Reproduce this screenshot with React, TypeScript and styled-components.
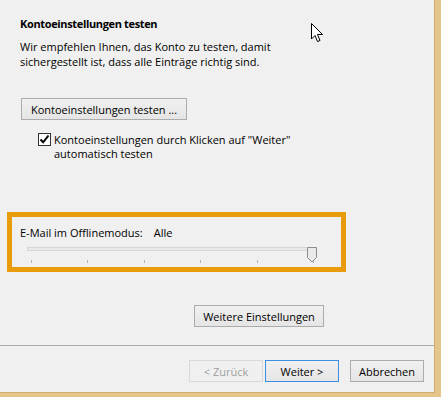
import styled, { createGlobalStyle } from "styled-components";

const GlobalStyle = createGlobalStyle`
  html, body {
    margin: 0;
    padding: 0;
    background: #e6c58b;
  }
  body {
    font-family: "Open Sans", "Noto Sans", sans-serif;
    font-size: 11px;
    color: #000;
  }
`;

const Frame = styled.div`
  width: 441px;
  height: 397px;
  box-sizing: border-box;
  padding: 0 6px 4px 0;
  background: #e6c58b;
`;

const Dialog = styled.div`
  position: relative;
  height: 100%;
  box-sizing: border-box;
  border-right: 1px solid #cfae72;
  border-bottom: 1px solid #cfae72;
  background: #f0f0f0;
  display: flex;
  flex-direction: column;
`;

const Main = styled.div`
  flex: 1;
  display: flex;
  flex-direction: column;
  align-items: flex-start;
  padding: 16px 0 0 20px;
`;

const Title = styled.h1`
  margin: 0;
  font-size: 11px;
  line-height: 15px;
  font-weight: 700;
  letter-spacing: -0.35px;
`;

const Intro = styled.p`
  margin: 8px 0 0;
  line-height: 15px;
`;

const Button = styled.button<{ $default?: boolean; $width?: number }>`
  box-sizing: border-box;
  height: 22px;
  width: ${({ $width }) => ($width ? `${$width}px` : "auto")};
  padding: 0 8px;
  white-space: nowrap;
  font-family: inherit;
  font-size: 11px;
  color: #000;
  background: linear-gradient(#f0f0f0, #e5e5e5);
  border: 1px solid ${({ $default }) => ($default ? "#3c8ee0" : "#acacac")};
  border-radius: 0;
  &:disabled {
    color: #a0a0a0;
    border-color: #d9d9d9;
    background: #f0f0f0;
  }
`;

const TestButton = styled(Button)`
  margin: 29px 0 0 1px;
  width: 166px;
`;

const CheckRow = styled.label`
  display: flex;
  gap: 3px;
  margin: 13px 0 0 18px;
  line-height: 14px;
`;

const Box = styled.span`
  flex: none;
  width: 13px;
  height: 13px;
  box-sizing: border-box;
  border: 1px solid #333;
  background: #fff;
  display: flex;
  align-items: center;
  justify-content: center;
`;

const Highlight = styled.div`
  margin: 51px 0 0 -13px;
  width: 339px;
  height: 60px;
  box-sizing: border-box;
  border: 5px solid #e89c0c;
  padding: 8px 0 0 8px;
`;

const OfflineLabel = styled.div`
  display: flex;
  gap: 11px;
  line-height: 15px;
`;

const Slider = styled.div`
  position: relative;
  margin: 7px 0 0 7px;
  width: 286px;
  height: 20px;
`;

const Track = styled.div`
  margin-top: 5px;
  height: 4px;
  box-sizing: border-box;
  background: #e7eaea;
  border: 1px solid #d6d6d6;
`;

const Thumb = styled.svg`
  position: absolute;
  top: 0;
  right: -5px;
`;

const Ticks = styled.div`
  margin: 9px 0 0 4px;
  width: 283px;
  display: flex;
  justify-content: space-between;
`;

const Tick = styled.span`
  width: 1px;
  height: 3px;
  background: #b4b4b4;
`;

const MoreButton = styled(Button)`
  margin: 33px 0 0 174px;
  width: 130px;
`;

const Separator = styled.hr`
  margin: 0;
  border: 0;
  border-top: 1px solid #a9a9a9;
`;

const Footer = styled.div`
  display: flex;
  justify-content: flex-end;
  padding: 14px 10px 10px 0;
`;

const Cursor = styled.svg`
  position: absolute;
  left: 311px;
  top: 23px;
`;

export default function App() {
  return (
    <>
      <GlobalStyle />
      <Frame>
        <Dialog>
          <Main>
            <Title>Kontoeinstellungen testen</Title>
            <Intro>
              Wir empfehlen Ihnen, das Konto zu testen, damit
              <br />
              sichergestellt ist, dass alle Einträge richtig sind.
            </Intro>
            <TestButton>Kontoeinstellungen testen ...</TestButton>
            <CheckRow>
              <Box>
                <svg width="11" height="11" viewBox="0 0 11 11">
                  <path d="M1.5 5.5 L4.2 8.3 L9.5 1.5" fill="none" stroke="#000" strokeWidth="2" />
                </svg>
              </Box>
              <span>
                Kontoeinstellungen durch Klicken auf "Weiter"
                <br />
                automatisch testen
              </span>
            </CheckRow>
            <Highlight>
              <OfflineLabel>
                <span>E-Mail im Offlinemodus:</span>
                <span>Alle</span>
              </OfflineLabel>
              <Slider>
                <Track />
                <Thumb width="11" height="16" viewBox="0 0 11 16">
                  <path d="M0.5 0.5 H9.5 V10.5 L5 15 L0.5 10.5 Z" fill="#eaeaea" stroke="#8c8c8c" />
                </Thumb>
                <Ticks>
                  {Array.from({ length: 6 }).map((_, i) => (
                    <Tick key={i} />
                  ))}
                </Ticks>
              </Slider>
            </Highlight>
            <MoreButton>Weitere Einstellungen</MoreButton>
          </Main>
          <Separator />
          <Footer>
            <Button disabled $width={74}>&lt; Zurück</Button>
            <Button $default $width={74} style={{ marginLeft: 2 }}>Weiter &gt;</Button>
            <Button $width={74} style={{ marginLeft: 11 }}>Abbrechen</Button>
          </Footer>
          <Cursor width="13" height="20" viewBox="0 0 13 20">
            <path
              d="M0.5 0.5 V16 L4 12.5 L6.5 18.5 L9 17.5 L6.5 11.5 L11.5 11.5 Z"
              fill="#fff"
              stroke="#000"
              strokeLinejoin="round"
            />
          </Cursor>
        </Dialog>
      </Frame>
    </>
  );
}
